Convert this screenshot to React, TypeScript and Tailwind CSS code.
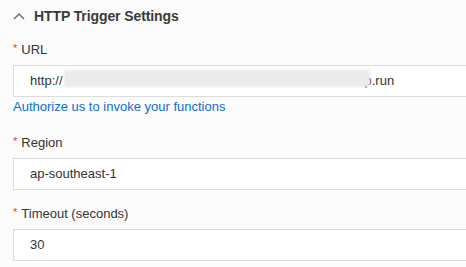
import React from "react";

function Label({ text }: { text: string }) {
  return (
    <div className="flex items-center h-[18px] text-[13px] leading-[18px] text-[#333333] mb-[6px]">
      <span className="text-[#e0413a] text-[11px] mr-[4px] leading-none relative top-[-2px]">*</span>
      <span>{text}</span>
    </div>
  );
}

function Box({ children }: { children: React.ReactNode }) {
  return (
    <div className="h-[32px] w-[480px] border border-[#dcdcdc] bg-white flex items-center pl-[16px] text-[13px] text-[#333333]">
      {children}
    </div>
  );
}

export default function App() {
  return (
    <div
      className="w-[466px] h-[267px] overflow-hidden bg-[#fbfbfb] pl-[13px] pt-[6px]"
      style={{ fontFamily: '"Liberation Sans", Arial, sans-serif' }}
    >
      <div className="flex items-center h-[20px]">
        <svg width="12" height="7" viewBox="0 0 12 7" className="mr-[9px]">
          <path d="M1 6 L6 1 L11 6" fill="none" stroke="#666666" strokeWidth="1.4" />
        </svg>
        <span className="text-[14px] font-bold text-[#3a3a3a] tracking-[-0.1px]">HTTP Trigger Settings</span>
      </div>

      <div className="mt-[15px]">
        <Label text="URL" />
        <Box>
          <div className="relative flex items-center">
            <span>http://</span>
            <span className="w-[302px]" />
            <span>p.run</span>
            <span className="absolute left-[34px] top-[-1px] w-[306px] h-[17px] bg-[#ebebeb] blur-[1.5px]" />
          </div>
        </Box>
        <div className="h-[20px] flex items-center text-[13px] text-[#0b6fd0]">
          Authorize us to invoke your functions
        </div>
      </div>

      <div className="mt-[17px]">
        <Label text="Region" />
        <Box>ap-southeast-1</Box>
      </div>

      <div className="mt-[15px]">
        <Label text="Timeout (seconds)" />
        <Box>30</Box>
      </div>
    </div>
  );
}
